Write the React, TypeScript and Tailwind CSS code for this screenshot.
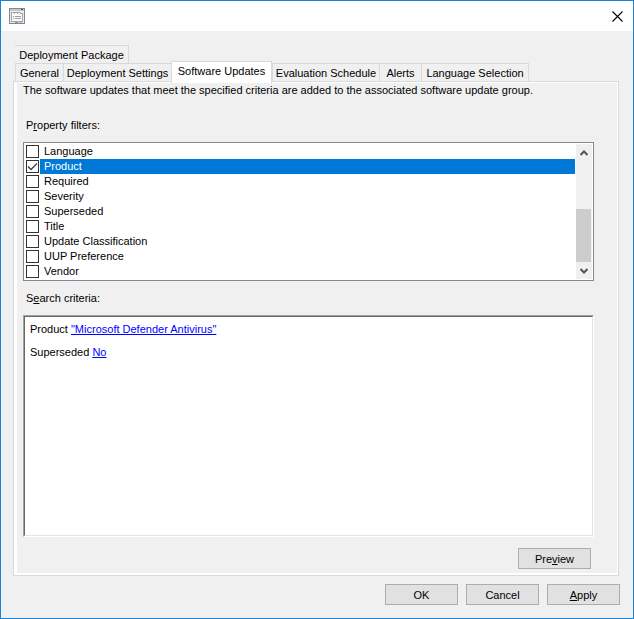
import { useState } from "react";

const tabs = [
  { name: "General", width: "w-[49px]" },
  { name: "Deployment Settings", width: "w-[109px]" },
  { name: "Software Updates", width: "w-[101px]" },
  { name: "Evaluation Schedule", width: "w-[108px]" },
  { name: "Alerts", width: "w-[43px]" },
  { name: "Language Selection", width: "w-[108px]" },
];

const filters = [
  "Language",
  "Product",
  "Required",
  "Severity",
  "Superseded",
  "Title",
  "Update Classification",
  "UUP Preference",
  "Vendor",
];

function WindowIcon() {
  return (
    <svg className="w-4 h-4" viewBox="0 0 16 16" shapeRendering="crispEdges" aria-hidden="true">
      <path d="M0 0h16v16H0z" fill="#85858c" />
      <path d="M1 1h14v2H1z" fill="#c3c6cd" />
      <path d="M12 1h2v1h-2z" fill="#44557f" />
      <path d="M1 3h14v12H1z" fill="#ececee" />
      <path d="M2 4h12v10H2z" fill="#a3a3aa" />
      <path d="M3 6h10v7H3zM3 5h2v1H3zM6 5h2v1H6zM9 5h2v1H9z" fill="#fafafa" />
      <path d="M11 4h3v1h-3z" fill="#ececee" />
      <path d="M6 8h6v1H6zM6 10h6v1H6z" fill="#9b9ba3" />
      <path d="M4 8h1v1H4zM4 10h1v1H4zM6 14h3v1H6z" fill="#42b4dc" />
      <path d="M10 14h3v1h-3z" fill="#b5b5ba" />
    </svg>
  );
}

function DialogButton({ children }: { children: React.ReactNode }) {
  return (
    <button
      type="button"
      className="w-[73px] h-[21px] border border-[#adadad] bg-[#e1e1e1] leading-4 hover:border-[#0078d7] hover:bg-[#e5f1fb]"
    >
      {children}
    </button>
  );
}

export default function App() {
  const [activeTab, setActiveTab] = useState("Software Updates");
  const [selected, setSelected] = useState("Product");
  const [checked, setChecked] = useState<string[]>(["Product"]);

  function toggle(name: string) {
    setSelected(name);
    setChecked(checked.includes(name) ? checked.filter((f) => f !== name) : [...checked, name]);
  }

  return (
    <div className="min-h-screen flex flex-col border border-[#1883d7] bg-[#f0f0f0] text-black text-[11px] leading-[15px] font-['Liberation_Sans',Arial,sans-serif]">
      <header className="h-[30px] pl-2 pr-[10px] flex items-center justify-between bg-white">
        <WindowIcon />
        <button type="button" aria-label="Close">
          <svg className="w-[11px] h-[11px]" viewBox="0 0 11 11" fill="none" stroke="#000" strokeWidth="1.1">
            <path d="M.5.5l10 10M10.5.5l-10 10" />
          </svg>
        </button>
      </header>

      <main className="flex-1 flex flex-col pt-[14px] pl-3 pr-[14px]">
        <div role="tablist" className="pl-[2px]">
          <button
            type="button"
            role="tab"
            aria-selected={activeTab === "Deployment Package"}
            onClick={() => setActiveTab("Deployment Package")}
            className="block w-[114px] h-[18px] pt-px border border-b-0 border-l-0 border-[#d9d9d9] whitespace-nowrap"
          >
            Deployment Package
          </button>
          <div className="flex items-end h-[18px]">
            {tabs.map((tab) => {
              const active = tab.name === activeTab;
              return (
                <button
                  key={tab.name}
                  type="button"
                  role="tab"
                  aria-selected={active}
                  onClick={() => setActiveTab(tab.name)}
                  className={`${tab.width} shrink-0 border border-b-0 border-[#d9d9d9] whitespace-nowrap ${
                    active ? "relative z-10 h-[22px] -mb-[2px] pb-[2px] bg-white" : "-mr-px h-[18px] pt-[2px]"
                  }`}
                >
                  {tab.name}
                </button>
              );
            })}
          </div>
        </div>

        <section className="flex-1 flex flex-col border border-[#d9d9d9] bg-white pl-[3px] pt-px pr-px pb-[2px]">
          <div className="flex-1 flex flex-col bg-[#f0f0f0] pl-[6px] pr-[23px] pb-1">
            <p>The software updates that meet the specified criteria are added to the associated software update group.</p>

            <h2 id="filters-label" className="mt-5 pl-[3px]">
              P<u className="underline-offset-1">r</u>operty filters:
            </h2>
            <div className="mt-[9px] flex border border-[#828790] bg-white p-px">
              <ul aria-labelledby="filters-label" className="flex-1 pl-px pr-px">
                {filters.map((name) => (
                  <li key={name}>
                    <label className="flex h-[15px]">
                      <span className="relative w-[14px] h-[15px] pt-px shrink-0">
                        <input
                          type="checkbox"
                          checked={checked.includes(name)}
                          onChange={() => toggle(name)}
                          className="block appearance-none w-[13px] h-[13px] border border-[#333] bg-white"
                        />
                        {checked.includes(name) && (
                          <svg className="absolute left-0 top-px w-[13px] h-[13px] pointer-events-none" viewBox="0 0 13 13" fill="none" stroke="#444" strokeWidth="1.4">
                            <path d="M2 6.5l3 3L11 3.5" />
                          </svg>
                        )}
                      </span>
                      <span className={`flex-1 pl-1 ${name === selected ? "bg-[#0078d7] text-white" : ""}`}>
                        {name}
                      </span>
                    </label>
                  </li>
                ))}
              </ul>
              <div className="w-4 shrink-0 flex flex-col items-center bg-[#f0f0f0]" aria-hidden="true">
                <svg className="mt-[6px] w-2 h-[6px] shrink-0" viewBox="0 0 8 6" fill="none" stroke="#555" strokeWidth="2">
                  <path d="M.5 5l3.5-3.5L7.5 5" />
                </svg>
                <div className="w-full pr-px mt-[53px]">
                  <div className="h-[53px] bg-[#cdcdcd]" />
                </div>
                <svg className="mt-auto mb-[5px] w-2 h-[6px] shrink-0" viewBox="0 0 8 6" fill="none" stroke="#555" strokeWidth="2">
                  <path d="M.5 1l3.5 3.5L7.5 1" />
                </svg>
              </div>
            </div>

            <h2 id="criteria-label" className="mt-[10px] pl-[3px]">
              S<u className="underline-offset-1">e</u>arch criteria:
            </h2>
            <div
              role="region"
              aria-labelledby="criteria-label"
              className="mt-[9px] flex-1 flex border border-t-[#a0a0a0] border-l-[#a0a0a0] border-r-white border-b-white"
            >
              <div className="flex-1 border border-t-[#696969] border-l-[#696969] border-r-[#e3e3e3] border-b-[#e3e3e3] bg-white px-[5px] pt-[5px] space-y-2">
                <p>
                  Product <a href="#product" className="text-[#0000ff] underline">"Microsoft Defender Antivirus"</a>
                </p>
                <p>
                  Superseded <a href="#superseded" className="text-[#0000ff] underline">No</a>
                </p>
              </div>
            </div>

            <div className="mt-[11px] flex justify-end pr-[3px]">
              <DialogButton>
                Pre<u className="underline-offset-1">v</u>iew
              </DialogButton>
            </div>
          </div>
        </section>
      </main>

      <footer className="flex justify-end gap-2 pt-2 pb-[13px] pr-[13px]">
        <DialogButton>OK</DialogButton>
        <DialogButton>Cancel</DialogButton>
        <DialogButton>
          <u className="underline-offset-1">A</u>pply
        </DialogButton>
      </footer>
    </div>
  );
}
